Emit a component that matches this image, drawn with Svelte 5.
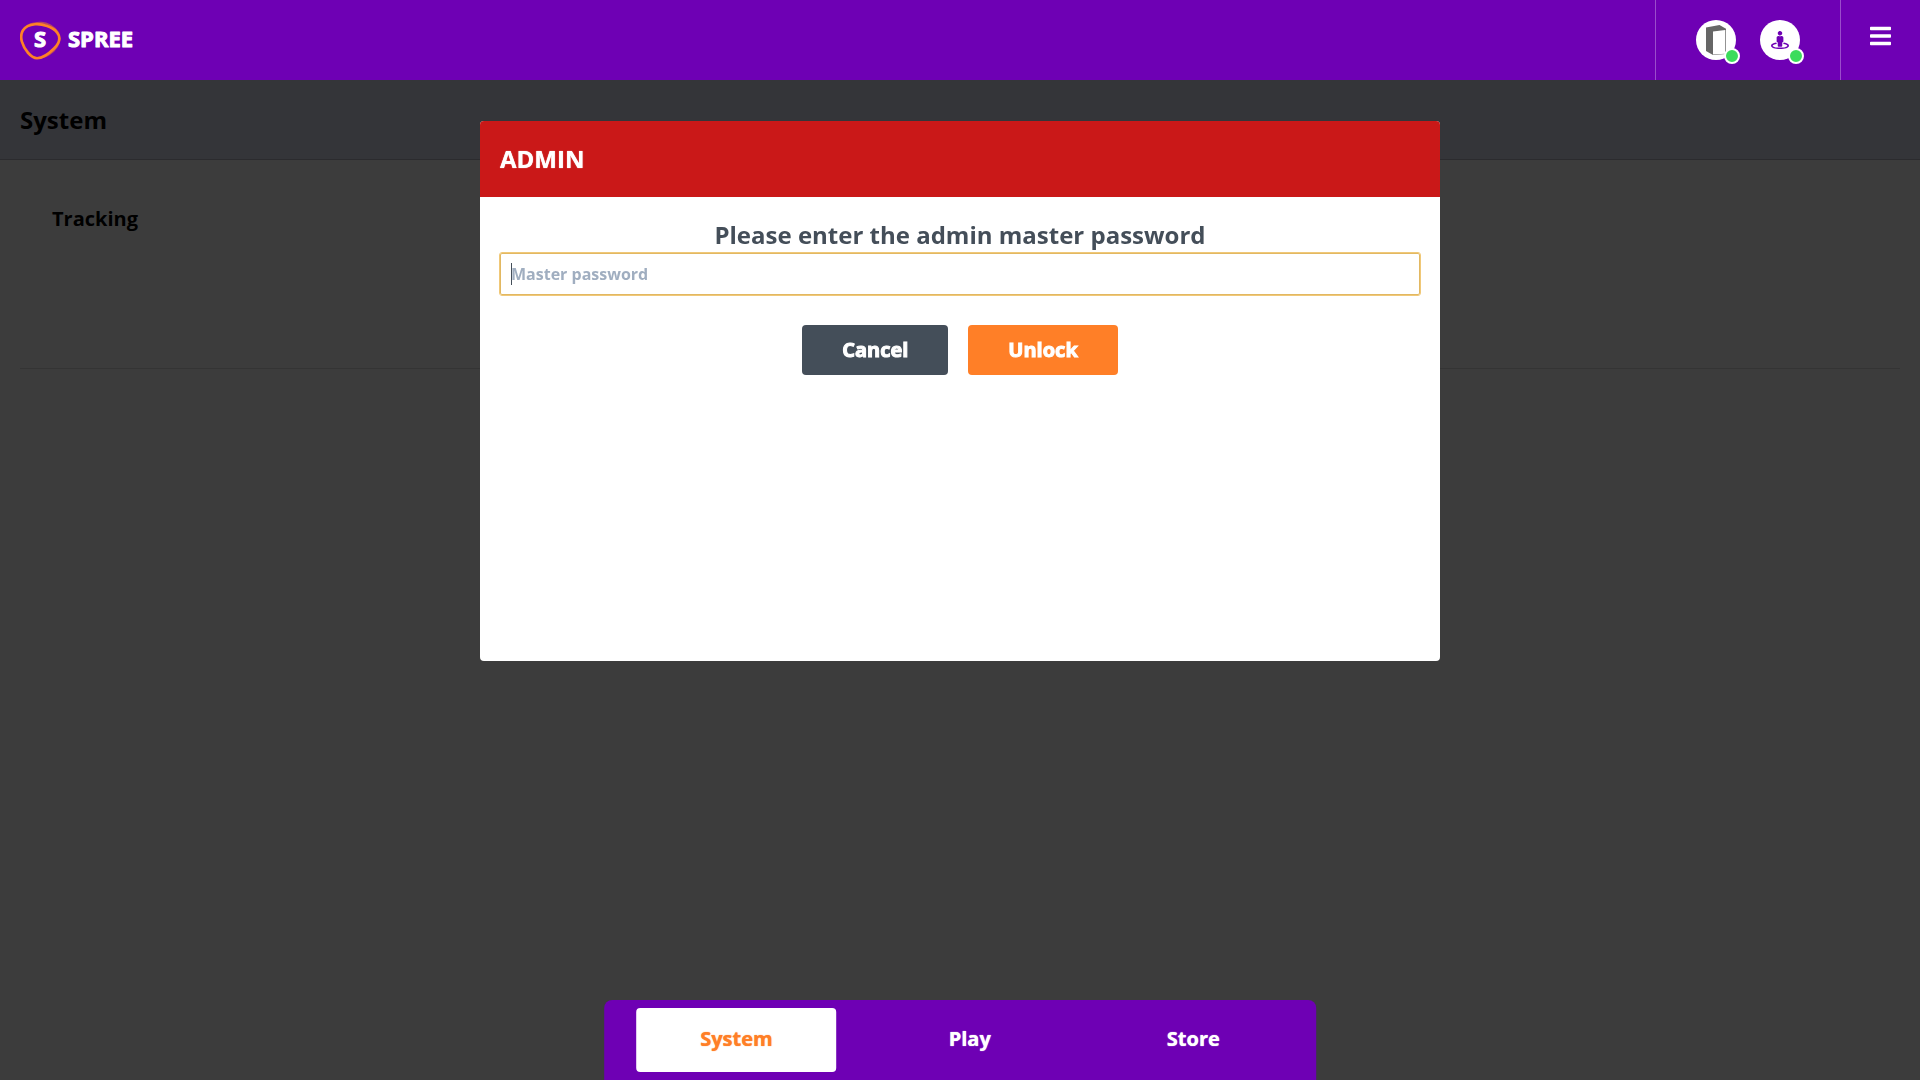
<script>
  let password = $state('');
  let current = $state('System');
  const tabs = ['System', 'Play', 'Store'];

  function focus(node) {
    node.focus();
  }
</script>

<div class="app">
  <header class="topbar">
    <a class="brand" href="#home" aria-label="Spree">
      <svg width="120" height="40" viewBox="0 0 120 40">
        <path d="M20 2.800C27 2 34.500 7 38 12.500C41.500 18.500 38.500 26 33.500 31C28.500 35.500 22 38 17.500 38C12 38 5.500 30 2.500 22.500C-.5 14.500 2.500 8.500 8 5.500C12 3.500 16 3.200 20 2.800Z" fill="none" stroke="#c8584f" stroke-width="2" opacity=".8" />
        <path d="M15 4.200C22 3.600 33 7 37 12.500C41.500 18 39 23.500 34 28.500C29 33.500 22.500 38.200 17 38.200C11 38.200 4 29.500 1.800 21.500C-.2 14 2.200 5.500 15 4.200Z" fill="none" stroke="#ff8126" stroke-width="2.600" />
        <text class="mark" x="20" y="27" text-anchor="middle">S</text>
        <text class="mark" x="48" y="27">SPREE</text>
      </svg>
    </a>

    <div class="tools">
      <div class="devices">
        <button class="device" aria-label="Computer connected">
          <svg width="40" height="40" viewBox="0 0 40 40">
            <path d="M10 7.500L23.500 5L30 8.800V34L17 35L10 31Z" fill="#666" />
            <path d="M17 11.500L29.300 10V33.700L17 34.500Z" fill="#fff" />
          </svg>
          <span class="status"></span>
        </button>
        <button class="device" aria-label="Tracking connected">
          <svg width="18" height="18" viewBox="0 0 512 512" fill="#6e00b4">
            <path d="M367.900 329.760c-4.620 5.300-9.780 10.100-15.900 13.650v22.940c66.520 9.340 112 28.050 112 49.650 0 30.930-93.120 56-208 56S48 446.930 48 416c0-21.600 45.480-40.300 112-49.650v-22.940c-6.120-3.550-11.280-8.350-15.900-13.650C58.870 345.340 0 378.050 0 416c0 53.020 114.620 96 256 96s256-42.980 256-96c0-37.950-58.870-70.660-144.100-86.240zM256 128c35.350 0 64-28.650 64-64S291.350 0 256 0s-64 28.650-64 64 28.650 64 64 64zm-64 192v96c0 17.670 14.330 32 32 32h64c17.670 0 32-14.330 32-32v-96c17.670 0 32-14.330 32-32v-96c0-26.510-21.490-48-48-48h-11.800c-11.070 5.030-23.260 8-36.200 8s-25.130-2.970-36.200-8H208c-26.510 0-48 21.490-48 48v96c0 17.670 14.330 32 32 32z" />
          </svg>
          <span class="status"></span>
        </button>
      </div>
      <button class="menu" aria-label="Menu">
        <svg width="21" height="24" viewBox="0 0 448 512" fill="#fff">
          <path d="M16 132h416c8.800 0 16-7.200 16-16V76c0-8.800-7.200-16-16-16H16C7.200 60 0 67.200 0 76v40c0 8.800 7.200 16 16 16zm0 160h416c8.800 0 16-7.200 16-16v-40c0-8.800-7.200-16-16-16H16c-8.800 0-16 7.200-16 16v40c0 8.800 7.200 16 16 16zm0 160h416c8.800 0 16-7.200 16-16v-40c0-8.800-7.200-16-16-16H16c-8.800 0-16 7.200-16 16v40c0 8.800 7.200 16 16 16z" />
        </svg>
      </button>
    </div>
  </header>

  <main>
    <h1>{current}</h1>
    <section>
      <h2>Tracking</h2>
    </section>
  </main>

  <div class="overlay">
    <div class="modal" role="dialog" aria-modal="true" aria-labelledby="modal-title">
      <h2 id="modal-title">ADMIN</h2>
      <form onsubmit={(e) => e.preventDefault()}>
        <label for="password">Please enter the admin master password</label>
        <div class="field">
          <input id="password" type="password" placeholder="Master password" bind:value={password} use:focus />
          {#if !password}<span class="caret"></span>{/if}
        </div>
        <div class="actions">
          <button type="button" class="cancel">Cancel</button>
          <button type="submit" class="unlock">Unlock</button>
        </div>
      </form>
    </div>
  </div>

  <nav>
    {#each tabs as tab}
      <button class:active={tab === current} onclick={() => (current = tab)}>{tab}</button>
    {/each}
  </nav>
</div>

<style>
  :global(body) {
    margin: 0;
    background: #f0f0f0;
  }
  .app {
    min-height: 100vh;
    font-family: 'Open Sans', sans-serif;
    line-height: 1.5;
    color: #000;
  }
  .app :global(*) {
    box-sizing: border-box;
  }
  button {
    border: 0;
    padding: 0;
    font: inherit;
    cursor: pointer;
  }
  svg {
    display: block;
  }

  .topbar {
    display: flex;
    justify-content: space-between;
    height: 80px;
    background: #6e00b4;
  }
  .brand {
    padding: 20px;
  }
  .mark {
    font-family: 'Open Sans', sans-serif;
    font-size: 22px;
    font-weight: 700;
    fill: #fff;
    stroke: #fff;
    stroke-width: 1px;
    stroke-linejoin: round;
  }
  .tools {
    display: flex;
  }
  .devices {
    display: flex;
    align-items: center;
    gap: 24px;
    padding: 0 40px;
    border-left: 1px solid #9a4dcb;
    border-right: 1px solid #9a4dcb;
  }
  .device {
    position: relative;
    display: flex;
    align-items: center;
    justify-content: center;
    width: 40px;
    height: 40px;
    border-radius: 50%;
    background: #fff;
  }
  .status {
    position: absolute;
    right: -4px;
    bottom: -4px;
    width: 16px;
    height: 16px;
    border: 2px solid #fff;
    border-radius: 50%;
    background: #3bdc5c;
  }
  .menu {
    display: flex;
    padding: 24px 29px;
    background: none;
  }

  h1,
  h2 {
    margin: 0;
  }
  h1 {
    padding: 22px 20px 21px;
    border-bottom: 1px solid #acacb8;
    background: #d0d4e4;
    font-size: 24px;
    font-weight: 700;
  }
  section {
    min-height: 209px;
    margin: 0 20px;
    padding: 44px 32px;
    border-bottom: 1px solid #d0d0d0;
  }
  section h2 {
    font-size: 20px;
    font-weight: 700;
  }

  .overlay {
    position: fixed;
    inset: 80px 0 0;
    display: flex;
    align-items: flex-start;
    justify-content: center;
    padding-top: 41px;
    background: rgba(0, 0, 0, 0.75);
  }
  .modal {
    width: 50%;
    min-height: 50vh;
    overflow: hidden;
    border-radius: 4px;
    background: #fff;
  }
  .modal h2 {
    padding: 20px;
    background: #ca1818;
    color: #fff;
    font-size: 24px;
    font-weight: 700;
    text-shadow: 0 0 1px currentColor;
  }
  form {
    display: flex;
    flex-direction: column;
    padding: 20px;
    color: #444e59;
  }
  label {
    font-size: 24px;
    font-weight: 700;
    text-align: center;
  }
  .field {
    position: relative;
    display: flex;
  }
  input {
    flex: 1;
    height: 42px;
    padding: 0 10px;
    border: 1px solid #e2b862;
    border-radius: 2px;
    outline: 1px solid #f0c878;
    color: #444e59;
    caret-color: transparent;
    font: 700 16px 'Open Sans', sans-serif;
  }
  input::placeholder {
    color: #a0aec0;
    opacity: 1;
  }
  .caret {
    position: absolute;
    top: 10px;
    left: 11px;
    width: 1px;
    height: 22px;
    background: #444e59;
  }
  .actions {
    display: flex;
    justify-content: center;
    gap: 20px;
    margin-top: 30px;
  }
  .actions button {
    padding: 10px 40px;
    border-radius: 4px;
    color: #fff;
    font-size: 20px;
    font-weight: 700;
    -webkit-text-stroke: 1px currentColor;
  }
  .actions .cancel {
    background: #444e59;
  }
  .actions .unlock {
    background: #ff7f27;
  }

  nav {
    position: fixed;
    bottom: 0;
    left: 50%;
    display: flex;
    gap: 48px;
    padding: 8px 32px;
    border-radius: 8px 8px 0 0;
    background: #6e00b4;
    transform: translateX(-50%);
  }
  nav button {
    height: 64px;
    padding: 0 64px 2px;
    border-radius: 4px;
    background: none;
    color: #fff;
    font-size: 20px;
    font-weight: 700;
    text-shadow: 0 0 1px currentColor;
  }
  nav .active {
    background: #fff;
    color: #ff7f27;
  }
</style>
